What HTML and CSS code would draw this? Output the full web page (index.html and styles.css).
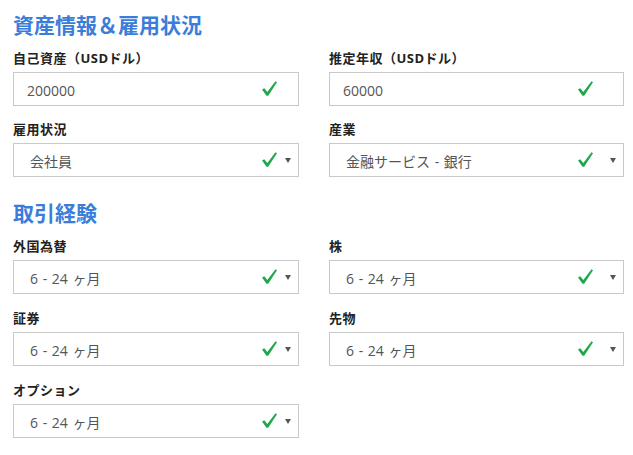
FILE: index.html
```html
<!DOCTYPE html>
<html lang="ja">
<head>
    <meta charset="UTF-8">
    <meta name="viewport" content="width=device-width, initial-scale=1.0">
    <title>資産情報＆雇用状況</title>
    <link rel="stylesheet" href="styles.css">
</head>
<body>
    <div class="form">
        <h2 class="section-title">資産情報＆雇用状況</h2>
        <div class="fields">
            <div class="field">
                <div class="field-label">自己資産（USDドル）</div>
                <div class="control">
                    <div class="box input">200000</div>
                    <svg class="check" viewBox="0 0 15 15"><polygon points="0,8.6 2.3,7.2 5.3,11 13.5,0.2 15,1.3 6.2,14.8 4.5,14.8"/></svg>
                </div>
            </div>
            <div class="field">
                <div class="field-label">推定年収（USDドル）</div>
                <div class="control">
                    <div class="box input">60000</div>
                    <svg class="check" viewBox="0 0 15 15"><polygon points="0,8.6 2.3,7.2 5.3,11 13.5,0.2 15,1.3 6.2,14.8 4.5,14.8"/></svg>
                </div>
            </div>
            <div class="field">
                <div class="field-label">雇用状況</div>
                <div class="control">
                    <div class="box select">会社員</div>
                    <svg class="check" viewBox="0 0 15 15"><polygon points="0,8.6 2.3,7.2 5.3,11 13.5,0.2 15,1.3 6.2,14.8 4.5,14.8"/></svg>
                    <span class="arrow"></span>
                </div>
            </div>
            <div class="field">
                <div class="field-label">産業</div>
                <div class="control">
                    <div class="box select">金融サービス - 銀行</div>
                    <svg class="check" viewBox="0 0 15 15"><polygon points="0,8.6 2.3,7.2 5.3,11 13.5,0.2 15,1.3 6.2,14.8 4.5,14.8"/></svg>
                    <span class="arrow"></span>
                </div>
            </div>
        </div>

        <h2 class="section-title second">取引経験</h2>
        <div class="fields wide">
            <div class="field">
                <div class="field-label">外国為替</div>
                <div class="control">
                    <div class="box select">6 - 24 ヶ月</div>
                    <svg class="check" viewBox="0 0 15 15"><polygon points="0,8.6 2.3,7.2 5.3,11 13.5,0.2 15,1.3 6.2,14.8 4.5,14.8"/></svg>
                    <span class="arrow"></span>
                </div>
            </div>
            <div class="field">
                <div class="field-label">株</div>
                <div class="control">
                    <div class="box select">6 - 24 ヶ月</div>
                    <svg class="check" viewBox="0 0 15 15"><polygon points="0,8.6 2.3,7.2 5.3,11 13.5,0.2 15,1.3 6.2,14.8 4.5,14.8"/></svg>
                    <span class="arrow"></span>
                </div>
            </div>
            <div class="field">
                <div class="field-label">証券</div>
                <div class="control">
                    <div class="box select">6 - 24 ヶ月</div>
                    <svg class="check" viewBox="0 0 15 15"><polygon points="0,8.6 2.3,7.2 5.3,11 13.5,0.2 15,1.3 6.2,14.8 4.5,14.8"/></svg>
                    <span class="arrow"></span>
                </div>
            </div>
            <div class="field">
                <div class="field-label">先物</div>
                <div class="control">
                    <div class="box select">6 - 24 ヶ月</div>
                    <svg class="check" viewBox="0 0 15 15"><polygon points="0,8.6 2.3,7.2 5.3,11 13.5,0.2 15,1.3 6.2,14.8 4.5,14.8"/></svg>
                    <span class="arrow"></span>
                </div>
            </div>
            <div class="field">
                <div class="field-label">オプション</div>
                <div class="control">
                    <div class="box select">6 - 24 ヶ月</div>
                    <svg class="check" viewBox="0 0 15 15"><polygon points="0,8.6 2.3,7.2 5.3,11 13.5,0.2 15,1.3 6.2,14.8 4.5,14.8"/></svg>
                    <span class="arrow"></span>
                </div>
            </div>
        </div>
    </div>
</body>
</html>
```

FILE: styles.css
```css
body {
    margin: 0;
    background: #fff;
    font-family: "Open Sans", "Noto Sans CJK JP", sans-serif;
    color: #222;
}
.form {
    padding: 10px 0 0 13px;
}
.section-title {
    margin: 0 0 11px;
    font-size: 21px;
    line-height: 28px;
    font-weight: bold;
    color: #3b7dd8;
    font-family: "Noto Sans CJK JP", sans-serif;
}
.section-title.second {
    margin-top: 7px;
}
.fields {
    display: grid;
    grid-template-columns: 286px 295px;
    column-gap: 30px;
}
.field {
    margin-bottom: 14px;
}
.wide .field {
    margin-bottom: 15px;
}
.field-label {
    font-size: 13px;
    line-height: 18px;
    font-weight: bold;
    letter-spacing: 0.5px;
    color: #222;
    margin-bottom: 5px;
}
.control {
    position: relative;
}
.box {
    height: 34px;
    box-sizing: border-box;
    border: 1px solid #c9c9c9;
    display: flex;
    align-items: center;
    font-size: 14px;
    color: #555;
    padding-top: 2px;
    word-spacing: 1px;
}
.input {
    padding-left: 13px;
}
.select {
    padding-left: 16px;
}
.check {
    position: absolute;
    left: 249px;
    top: 9px;
    width: 15px;
    height: 15px;
    fill: #1fa84a;
}
.arrow {
    position: absolute;
    right: 8px;
    top: 15px;
    border-left: 3px solid transparent;
    border-right: 3px solid transparent;
    border-top: 5px solid #555;
}
```
